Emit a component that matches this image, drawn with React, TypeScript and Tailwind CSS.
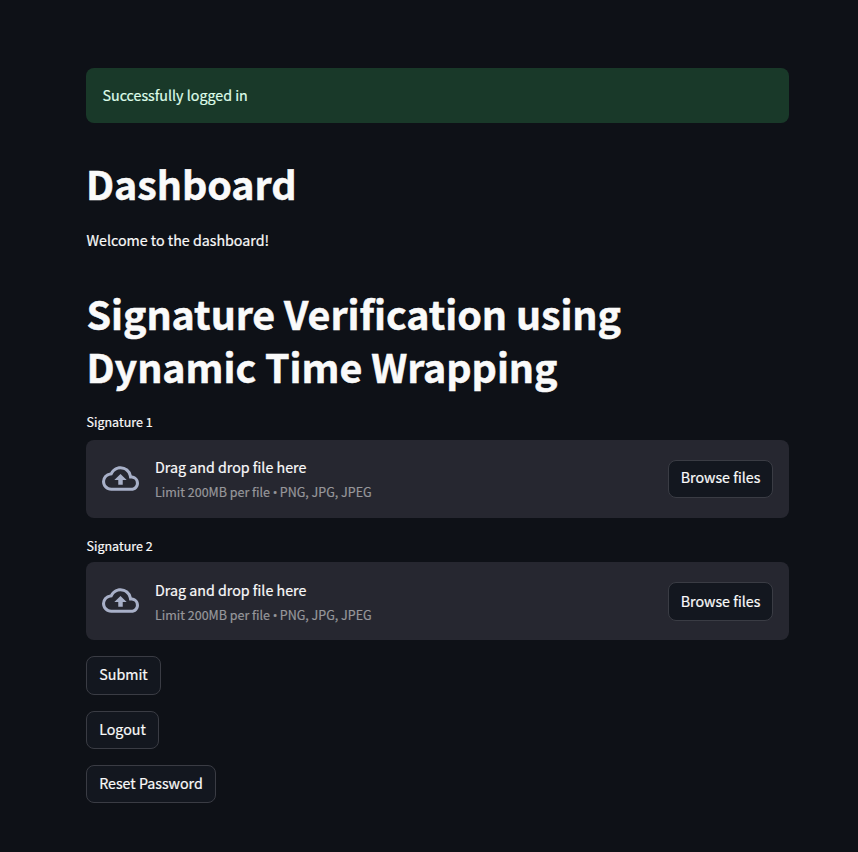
import React from "react";

function CloudUploadIcon() {
  return (
    <svg viewBox="0 0 24 24" className="mb-[2px] h-[37px] w-[37px] shrink-0 fill-[#a8b0c8]" aria-hidden="true">
      <path d="M19.35 10.04A7.49 7.49 0 0 0 12 4C9.11 4 6.6 5.64 5.35 8.04A5.994 5.994 0 0 0 0 14c0 3.31 2.69 6 6 6h13c2.76 0 5-2.24 5-5 0-2.64-2.05-4.78-4.65-4.96zM19 18H6c-2.21 0-4-1.79-4-4 0-2.05 1.53-3.76 3.56-3.97l1.07-.11.5-.95A5.469 5.469 0 0 1 12 6c2.62 0 4.88 1.86 5.39 4.43l.3 1.5 1.53.11A2.98 2.98 0 0 1 22 15c0 1.65-1.35 3-3 3zM8 13h2.55v3h2.9v-3H16l-4-4-4 4z" />
    </svg>
  );
}

function Button({ children, className }: { children: React.ReactNode; className: string }) {
  return (
    <button
      className={`flex shrink-0 items-center justify-center whitespace-nowrap rounded-lg border border-[#3a3c44] bg-[#13171f] text-[14.25px] leading-[24px] text-[#fafafa] ${className}`}
    >
      {children}
    </button>
  );
}

type UploaderProps = {
  label: string;
  className: string;
  labelClass: string;
  textClass: string;
  limitClass: string;
  button: string;
};

function Uploader({ label, className, labelClass, textClass, limitClass, button }: UploaderProps) {
  return (
    <section className={className}>
      <label className={`block pl-[0.5px] text-[12.5px] leading-[20px] text-[#fafafa] ${labelClass}`}>{label}</label>
      <div className="flex h-[78px] items-center rounded-lg bg-[#262730] px-4">
        <CloudUploadIcon />
        <div className={`ml-4 flex flex-1 flex-col whitespace-nowrap ${textClass}`}>
          <span className="text-[14.25px] leading-[25px] text-[#fafafa]">Drag and drop file here</span>
          <span className={`text-[12.5px] text-[#97979b] ${limitClass}`}>
            Limit 200MB per file <span className="font-['Open_Sans',sans-serif] text-[12.5px] leading-none tracking-[-0.6px]">•</span> PNG,
            JPG, JPEG
          </span>
        </div>
        <Button className={button}>Browse files</Button>
      </div>
    </section>
  );
}

export default function App() {
  return (
    <main className="h-[852px] w-[858px] overflow-hidden bg-[#0e1117] pl-[86px] pt-[68px] font-['Noto_Sans_CJK_SC',sans-serif] text-[#fafafa] [-webkit-text-stroke:0.2px]">
      <div className="w-[703px]">
        <div className="flex h-[55px] items-center rounded-lg bg-[#193929] pl-[16.5px] pr-4 pb-[2px] text-[14.25px] leading-[24px] text-[#dffde9]">
          Successfully logged in
        </div>
        <h1 className="mt-[33px] h-[53px] whitespace-nowrap text-[39.4px] font-bold leading-[53px] tracking-[-0.05px] [-webkit-text-stroke:0.5px]">
          Dashboard
        </h1>
        <p className="mt-[19px] pl-[0.5px] text-[14.25px] leading-[24px]">Welcome to the dashboard!</p>
        <h1 className="mt-[34px] whitespace-nowrap pl-[0.5px] text-[39.4px] font-bold leading-[53px] tracking-[-0.05px] [-webkit-text-stroke:0.5px]">
          Signature Verification using
          <br />
          Dynamic Time Wrapping
        </h1>
        <Uploader
          label="Signature 1"
          className="mt-[20px]"
          labelClass="h-[28px]"
          textClass="pb-px"
          limitClass="leading-[25px]"
          button="h-[38px] w-[105px] pb-[4px]"
        />
        <Uploader
          label="Signature 2"
          className="mt-[18px]"
          labelClass="h-[26px]"
          textClass="pt-[3px]"
          limitClass="leading-[26px]"
          button="h-[39px] w-[105px]"
        />
        <div className="mt-4 flex flex-col items-start gap-4">
          <Button className="h-[39px] w-[75px] pb-[3px]">Submit</Button>
          <Button className="h-[38px] w-[73px] pb-[2px]">Logout</Button>
          <Button className="h-[38px] w-[130px] pb-[2px]">Reset Password</Button>
        </div>
      </div>
    </main>
  );
}
